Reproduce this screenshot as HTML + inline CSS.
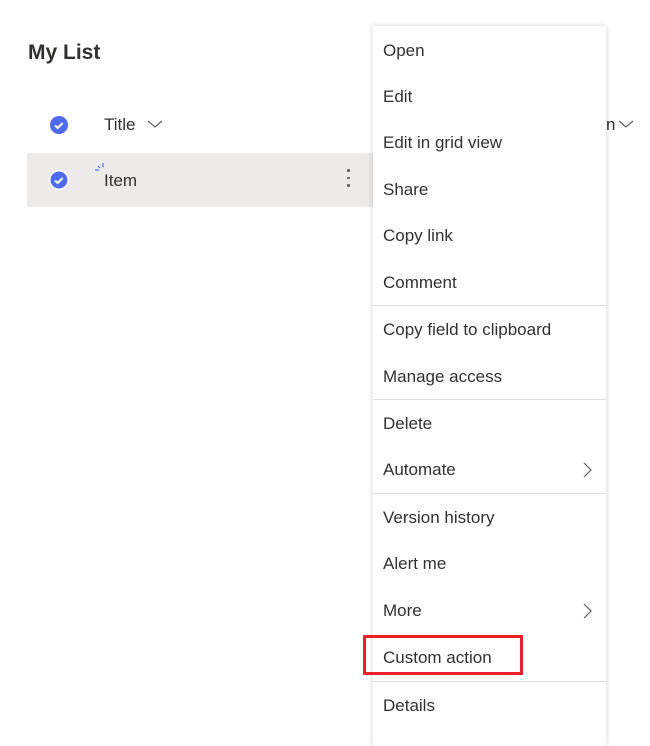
<!DOCTYPE html>
<html><head><style>
body{margin:0;width:650px;height:726px;background:#fff;font-family:"Liberation Sans",sans-serif;color:#323130;position:relative;overflow:hidden}
.a{position:absolute}
.menu{position:absolute;left:373px;top:26px;width:233px;height:720px;background:#fff;box-shadow:0 0 6px rgba(0,0,0,.18)}
.it{position:absolute;left:10px;font-size:17px;color:#323130;line-height:20px}
.dv{position:absolute;left:0;width:233px;height:1px;background:#e1dfdd}
.chev{position:absolute;right:14px}
</style></head><body>
<div class="a" style="left:28px;top:41px;font-size:21px;font-weight:bold;color:#323130">My List</div>
<svg class="a" style="left:49px;top:115px" width="20" height="20"><circle cx="10" cy="10" r="9" fill="#4f6bed"/><path d="M6 10.5l2.7 2.5 5-5" stroke="#fff" stroke-width="2" fill="none"/></svg>
<div class="a" style="left:104px;top:115px;font-size:17px">Title</div>
<svg class="a" style="left:147px;top:119px" width="16" height="10"><path d="M1 2l7 6 7-6" stroke="#605e5c" stroke-width="1.2" fill="none"/></svg>
<div class="a" style="left:27px;top:153px;width:346px;height:54px;background:#edebe9"></div>
<svg class="a" style="left:48px;top:169px" width="22" height="22"><circle cx="11" cy="11" r="10" fill="#fff"/><circle cx="11" cy="11" r="8.5" fill="#4f6bed"/><path d="M7 11.5l2.7 2.5 5-5" stroke="#fff" stroke-width="2" fill="none"/></svg>
<svg class="a" style="left:94px;top:162px" width="12" height="10"><path d="M1 8h4M4 4l2 2M9 1v4" stroke="#4f6bed" stroke-width="1.2"/></svg>
<div class="a" style="left:104px;top:171px;font-size:17px">Item</div>
<div class="a" style="left:347px;top:169px;width:3px;height:20px"><div style="width:2.5px;height:2.5px;border-radius:50%;background:#605e5c;margin-bottom:5px"></div><div style="width:2.5px;height:2.5px;border-radius:50%;background:#605e5c;margin-bottom:5px"></div><div style="width:2.5px;height:2.5px;border-radius:50%;background:#605e5c"></div></div>
<div class="a" style="left:606px;top:115px;font-size:17px">n</div>
<svg class="a" style="left:618px;top:119px" width="16" height="10"><path d="M1 2l7 6 7-6" stroke="#605e5c" stroke-width="1.2" fill="none"/></svg>
<div class="menu">
<div class="it" style="top:15px">Open</div>
<div class="it" style="top:61px">Edit</div>
<div class="it" style="top:107px">Edit in grid view</div>
<div class="it" style="top:154px">Share</div>
<div class="it" style="top:200px">Copy link</div>
<div class="it" style="top:247px">Comment</div>
<div class="dv" style="top:279px"></div>
<div class="it" style="top:294px">Copy field to clipboard</div>
<div class="it" style="top:341px">Manage access</div>
<div class="dv" style="top:373px"></div>
<div class="it" style="top:388px">Delete</div>
<div class="it" style="top:434px">Automate</div>
<svg class="chev" style="top:436px" width="10" height="16"><path d="M2 1l7 7-7 7" stroke="#605e5c" stroke-width="1.2" fill="none"/></svg>
<div class="dv" style="top:467px"></div>
<div class="it" style="top:482px">Version history</div>
<div class="it" style="top:528px">Alert me</div>
<div class="it" style="top:575px">More</div>
<svg class="chev" style="top:577px" width="10" height="16"><path d="M2 1l7 7-7 7" stroke="#605e5c" stroke-width="1.2" fill="none"/></svg>
<div class="it" style="top:622px">Custom action</div>
<div class="dv" style="top:655px"></div>
<div class="it" style="top:670px">Details</div>
</div>
<div class="a" style="left:363px;top:635px;width:154px;height:34px;border:3px solid #e8202a"></div>
</body></html>
